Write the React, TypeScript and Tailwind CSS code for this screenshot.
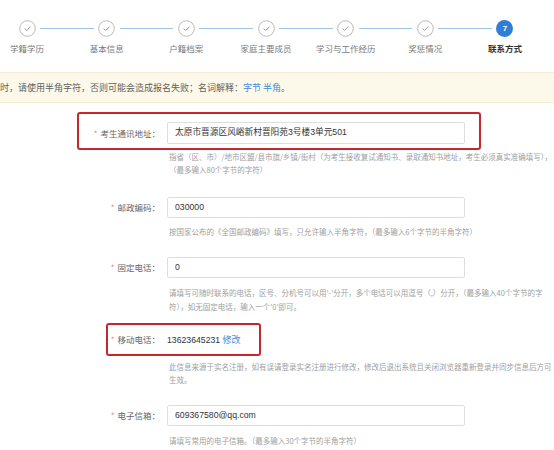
import React from "react";

const FONT = { fontFamily: '"Liberation Sans", "Noto Sans CJK SC", sans-serif' };
const CJK = { fontFamily: '"Noto Sans CJK SC", sans-serif' };

const steps = ["学籍学历", "基本信息", "户籍档案", "家庭主要成员", "学习与工作经历", "奖惩情况", "联系方式"];

function DoneIcon() {
  return (
    <svg width="17" height="17" viewBox="0 0 17 17">
      <circle cx="8.5" cy="8.5" r="7.8" fill="white" stroke="#b9b9b9" strokeWidth="1" />
      <path d="M5.9 8.9 L7.7 10.5 L11.1 6.9" fill="none" stroke="#9c9c9c" strokeWidth="1" strokeLinecap="round" strokeLinejoin="round" />
    </svg>
  );
}

function Stepper() {
  return (
    <div className="h-[72px] pt-[20px]">
      <div className="flex ml-[-12.8px]">
        {steps.map((s, i) => {
          const last = i === steps.length - 1;
          return (
            <div key={s} className="relative w-[79.67px] shrink-0 flex flex-col items-center">
              {last ? (
                <div className="w-[17px] h-[17px] rounded-full bg-[#2f7fd6] flex items-center justify-center text-white text-[8px] leading-none font-bold">
                  7
                </div>
              ) : (
                <DoneIcon />
              )}
              {!last && (
                <div className="absolute top-[8px] left-[calc(50%+13px)] w-[53.67px] h-px bg-[#9fc2e2]" />
              )}
              <div
                style={CJK}
                className={
                  "mt-[5px] h-[12px] text-[8.5px] leading-[12px] whitespace-nowrap " +
                  (last ? "text-[#333] font-bold" : "text-[#7a7a7a]")
                }
              >
                {s}
              </div>
            </div>
          );
        })}
      </div>
    </div>
  );
}

function Label({ text }: { text: string }) {
  return (
    <span style={CJK} className="text-[8.5px] leading-[12px] text-[#666] whitespace-nowrap">
      <span className="text-[#ee7f6c] text-[8px] mr-[3px]">*</span>
      {text}
    </span>
  );
}

function Input({ value, h = "h-[21px]" }: { value: string; h?: string }) {
  return (
    <div
      className={
        "ml-[7px] w-[298px] shrink-0 border border-[#dedede] rounded-[2px] bg-white flex items-center pl-[7px] text-[8.7px] text-[#333] whitespace-nowrap " +
        h
      }
    >
      {value}
    </div>
  );
}

function Help({ children, className }: { children: React.ReactNode; className?: string }) {
  return (
    <div style={CJK} className={"ml-[169px] text-[7.5px] text-[#a0a0a0] whitespace-nowrap " + (className || "")}>
      {children}
    </div>
  );
}

function Row({ label, value, className }: { label: string; value: string; className?: string }) {
  return (
    <div className={"flex items-center h-[21px] " + (className || "")}>
      <div className="w-[160px] shrink-0 text-right h-[12px] flex items-center justify-end">
        <Label text={label} />
      </div>
      <Input value={value} />
    </div>
  );
}

export default function App() {
  return (
    <div className="w-[554px] h-[450px] overflow-hidden bg-white relative" style={FONT}>
      <Stepper />

      <div className="h-[31px] bg-[#fdf9ea] border-y border-[#f4ecd0] flex items-center overflow-hidden">
        <span style={CJK} className="text-[9px] text-[#5f5f5f] whitespace-nowrap">
          时，请使用半角字符，否则可能会造成报名失败；名词解释：<span className="text-[#3d8bd6]">字节 半角</span>。
        </span>
      </div>

      {/* 考生通讯地址 */}
      <div className="mt-[9px] ml-[77px] w-[404px] h-[38px] border-2 border-[#c2282d] rounded-[3px] pt-[8px] pb-[4px] flex items-center">
        <div className="w-[81px] shrink-0 h-[12px] flex items-center justify-end">
          <Label text="考生通讯地址：" />
        </div>
        <Input h="h-[22px]" value="太原市晋源区风峪新村晋阳苑3号楼3单元501" />
      </div>
      <Help className="h-[26px] leading-[13px]">
        指省（区、市）/地市区盟/县市旗/乡镇/街村（为考生接收复试通知书、录取通知书地址，考生必须真实准确填写），
        <br />
        （最多输入80个字节的字符）
      </Help>

      {/* 邮政编码 */}
      <Row className="mt-[21px]" label="邮政编码：" value="030000" />
      <Help className="mt-[7px] h-[13px] leading-[13px]">
        按国家公布的《全国邮政编码》填写，只允许输入半角字符，（最多输入6个字节的半角字符）
      </Help>

      {/* 固定电话 */}
      <Row className="mt-[19px]" label="固定电话：" value="0" />
      <Help className="mt-[8px] h-[27px] leading-[13.5px]">
        请填写可随时联系的电话，区号、分机号可以用'-'分开，多个电话可以用逗号（,）分开，（最多输入40个字节的字
        <br />
        符），如无固定电话，输入一个'0'即可。
      </Help>

      {/* 移动电话 */}
      <div className="mt-[10px] ml-[106px] w-[155px] h-[33px] border-2 border-[#c2282d] rounded-[3px] flex items-center">
        <div className="w-[52px] shrink-0 h-[12px] flex items-center justify-end">
          <Label text="移动电话：" />
        </div>
        <span className="ml-[7px] text-[8.7px] leading-[12px] text-[#333] whitespace-nowrap">
          13623645231 <span style={CJK} className="text-[#3d8bd6] text-[9px]">修改</span>
        </span>
      </div>
      <Help className="mt-[4px] h-[26px] leading-[13px]">
        此信息来源于实名注册，如有误请登录实名注册进行修改，修改后退出系统且关闭浏览器重新登录并同步信息后方可
        <br />
        生效。
      </Help>

      {/* 电子信箱 */}
      <Row className="mt-[19px]" label="电子信箱：" value="609367580@qq.com" />
      <Help className="mt-[8px] h-[13px] leading-[13px]">请填写常用的电子信箱。（最多输入30个字节的半角字符）</Help>
    </div>
  );
}
